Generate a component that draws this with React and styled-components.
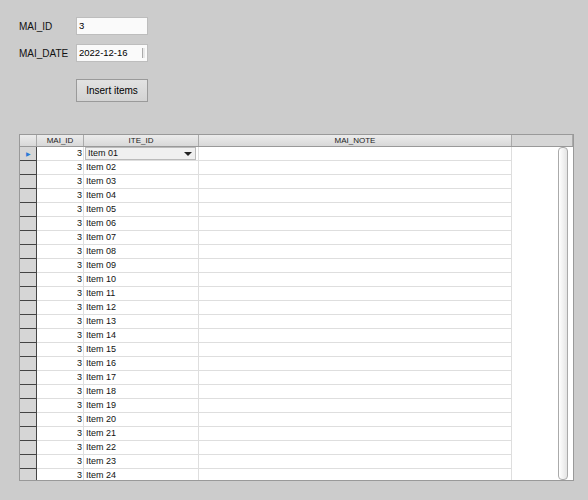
import React from 'react';
import styled, { createGlobalStyle } from 'styled-components';

const Global = createGlobalStyle`
  html, body { margin: 0; background: #cccccc; }
  body { font-family: "Liberation Sans", Arial, sans-serif; }
`;

const Page = styled.div`
  width: 588px;
  height: 500px;
  padding: 17px 0 0 19px;
  box-sizing: border-box;
`;

const Form = styled.div`
  display: grid;
  grid-template-columns: 57px 72px;
  row-gap: 9px;
  align-items: center;
`;

const Label = styled.span`
  font-size: 10px;
  color: #111;
`;

const Input = styled.div`
  height: 18px;
  box-sizing: border-box;
  background: #fafafa;
  border: 1px solid #bdbdbd;
  font-size: 9.5px;
  line-height: 16px;
  padding-left: 2px;
  display: flex;
  justify-content: space-between;
`;

const Spin = styled.span`
  width: 2px;
  margin: 3px 2px;
  border-left: 1px solid #aaa;
  background: #e8e8e8;
`;

const Button = styled.div`
  grid-column: 2;
  margin-top: 8px;
  height: 23px;
  box-sizing: border-box;
  border: 1px solid #9a9a9a;
  background: linear-gradient(#e2e2e2, #d3d3d3);
  font-size: 10px;
  display: flex;
  align-items: center;
  justify-content: center;
`;

const Grid = styled.div`
  margin-top: 32px;
  width: 555px;
  height: 347px;
  box-sizing: border-box;
  border: 1px solid #999;
  background: #fff;
  position: relative;
  overflow: hidden;
`;

const cols = '17px 47px 115px 313px 1fr';

const HeaderRow = styled.div`
  display: grid;
  grid-template-columns: ${cols};
  height: 11px;
  background: linear-gradient(#ececec, #d8d8d8);
  border-bottom: 1px solid #999;
`;

const HeadCell = styled.div`
  font-size: 8px;
  line-height: 11px;
  text-align: center;
  color: #222;
  border-right: 1px solid #aaa;
  ${p => p.$blank && 'background: #d6d6d6;'}
`;

const Row = styled.div`
  display: grid;
  grid-template-columns: ${cols};
  height: 14px;
`;

const RowHead = styled.div`
  background: #d6d6d6;
  border-bottom: 1px solid #444;
  border-right: 1px solid #444;
  display: flex;
  align-items: center;
  justify-content: center;
  color: #2a7bd6;
  font-size: 6px;
`;

const Cell = styled.div`
  font-size: 9px;
  line-height: 13px;
  color: #111;
  border-bottom: 1px solid #dedede;
  border-right: 1px solid #dedede;
  text-align: ${p => (p.$right ? 'right' : 'left')};
  padding: 0 ${p => (p.$right ? '1px' : '2px')};
  overflow: hidden;
  white-space: nowrap;
  ${p => p.$plain && 'border: none;'}
`;

const Combo = styled.div`
  display: flex;
  justify-content: space-between;
  align-items: center;
  height: 13px;
  background: #f0f0f0;
  border: 1px solid #bbb;
  box-sizing: border-box;
  margin-left: -1px;
  padding-left: 2px;
  font-size: 9px;
`;

const Arrow = styled.span`
  width: 0;
  height: 0;
  margin-right: 3px;
  border-left: 4px solid transparent;
  border-right: 4px solid transparent;
  border-top: 4px solid #222;
`;

const Scroll = styled.div`
  position: absolute;
  right: 5px;
  top: 12px;
  bottom: 0;
  width: 8px;
  border: 1px solid #aaa;
  border-radius: 4px;
  background: linear-gradient(90deg, #fff, #e4e4e4);
`;

const items = Array.from({ length: 24 }, (_, i) => `Item ${String(i + 1).padStart(2, '0')}`);

export default function App() {
  return (
    <Page>
      <Global />
      <Form>
        <Label>MAI_ID</Label>
        <Input>3</Input>
        <Label>MAI_DATE</Label>
        <Input>2022-12-16<Spin /></Input>
        <Button>Insert items</Button>
      </Form>
      <Grid>
        <HeaderRow>
          <HeadCell />
          <HeadCell>MAI_ID</HeadCell>
          <HeadCell>ITE_ID</HeadCell>
          <HeadCell>MAI_NOTE</HeadCell>
          <HeadCell $blank />
        </HeaderRow>
        {items.map((it, i) => (
          <Row key={it}>
            <RowHead>{i === 0 ? '▶' : ''}</RowHead>
            <Cell $right>3</Cell>
            <Cell>{i === 0 ? <Combo>{it}<Arrow /></Combo> : it}</Cell>
            <Cell />
            <Cell $plain />
          </Row>
        ))}
        <Scroll />
      </Grid>
    </Page>
  );
}
